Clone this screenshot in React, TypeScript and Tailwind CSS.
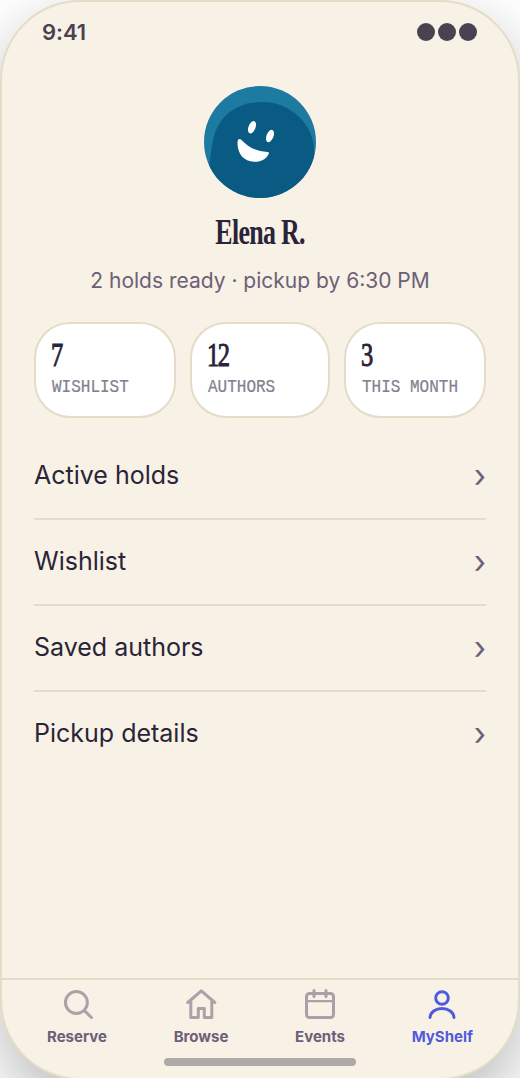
import React from "react";

const stats = [
  { value: "7", label: "WISHLIST" },
  { value: "12", label: "AUTHORS" },
  { value: "3", label: "THIS MONTH" },
];

const links = ["Active holds", "Wishlist", "Saved authors", "Pickup details"];

function Icon({ children }: { children: React.ReactNode }) {
  return (
    <svg
      width="36"
      height="36"
      viewBox="0 0 24 24"
      fill="none"
      stroke="currentColor"
      strokeWidth="2"
      strokeLinecap="round"
      strokeLinejoin="round"
    >
      {children}
    </svg>
  );
}

const tabs = [
  {
    label: "Reserve",
    icon: (
      <>
        <circle cx="11.6" cy="11" r="7.3" />
        <path d="M17 16.4l4.6 4.6" />
      </>
    ),
  },
  {
    label: "Browse",
    icon: <path d="M3.2 11L12.2 3.2l9 7.8M5.2 10V21h5v-6h4v6h5V10" />,
  },
  {
    label: "Events",
    icon: (
      <>
        <rect x="3" y="5" width="18" height="16" rx="2" />
        <path d="M8 3v4M16 3v4" />
        <path d="M3 10h18" strokeWidth="1.5" />
      </>
    ),
  },
  {
    label: "MyShelf",
    icon: (
      <>
        <circle cx="12" cy="8" r="4.2" />
        <path d="M4 21c.3-3.7 3.7-6 8-6s7.7 2.3 8 6" />
      </>
    ),
  },
];

function Avatar() {
  return (
    <svg width="112" height="112" viewBox="0 0 112 112" className="shrink-0">
      <defs>
        <clipPath id="avatar">
          <circle cx="56" cy="56" r="56" />
        </clipPath>
      </defs>
      <g clipPath="url(#avatar)">
        <rect width="112" height="112" fill="#1d7aa1" />
        <path
          d="M5 81C7 65 9 51 12 44C20 26 37 16 59 16C86 16 110 38 110 65V112H5Z"
          fill="#0a5b84"
        />
        <ellipse cx="48" cy="41.2" rx="3.5" ry="6.5" transform="rotate(22 48 41.2)" fill="#fff" />
        <ellipse cx="66" cy="50" rx="3.5" ry="6.5" transform="rotate(22 66 50)" fill="#fff" />
        <path
          d="M35.5 53Q33.5 53 33.5 57C33.5 68 40 75.5 50 75.8C57.5 76 63 72.5 65 67Q65 66 63.5 66C52 65 45 62 37.5 54Q36.5 53 35.5 53Z"
          fill="#fff"
        />
      </g>
    </svg>
  );
}

export default function App() {
  return (
    <div className="h-[1078px] w-[520px] overflow-hidden bg-white font-['Inter',sans-serif] text-[#2a2438]">
      <main className="flex h-[1080px] w-[520px] flex-col overflow-hidden rounded-[80px] border-2 border-[#e5dcc8] bg-[#f8f1e5] shadow-[0_24px_64px_rgba(0,0,0,0.28)]">
        <header className="flex h-[60px] shrink-0 items-center justify-between pr-[41px] pl-10 text-[#4a4251]">
          <span className="text-[22px] font-semibold tracking-[-0.1px]">9:41</span>
          <div className="flex gap-[3px]">
            <i className="size-[18px] rounded-full bg-[#4a4251]" />
            <i className="size-[18px] rounded-full bg-[#4a4251]" />
            <i className="size-[18px] rounded-full bg-[#4a4251]" />
          </div>
        </header>

        <section className="flex flex-col items-center pt-6">
          <Avatar />
          <h1 className="mt-[11px] flex h-[44px] w-[90px] items-center justify-center pt-[2px] font-['Liberation_Serif',serif] text-[36px] leading-[44px] font-bold tracking-[-1px] whitespace-nowrap">
            <span className="scale-x-[0.72]">Elena R.</span>
          </h1>
          <p className="mt-[14px] text-[21px] leading-[28px] text-[#6c6078]">
            2 holds ready · pickup by 6:30 PM
          </p>
        </section>

        <section className="mt-[27px] grid grid-cols-[142px_140px_142px] gap-[14px] px-8">
          {stats.map((s) => (
            <div key={s.label} className="flex h-24 flex-col items-start rounded-[36px] border-2 border-[#e5dcc8] bg-white pt-[13px] pl-[15px]">
              <span className="origin-left scale-x-[0.72] font-['Liberation_Serif',serif] text-[34px] leading-[36px] tracking-[-2px] [-webkit-text-stroke:1px_#2a2438]">{s.value}</span>
              <span className="mt-[5px] ml-px origin-center scale-y-[1.12] font-['Liberation_Mono',monospace] text-[16px] leading-5 whitespace-nowrap text-[#85808d] [-webkit-text-stroke:0.2px_#85808d]">
                {s.label}
              </span>
            </div>
          ))}
        </section>

        <nav className="mt-4 flex flex-col px-8">
          {links.map((label) => (
            <a key={label} className="flex h-[86px] items-center justify-between border-b-2 border-[#e5dcc8] text-[25px] last:border-transparent">
              <span>{label}</span>
              <span className="text-[32px] text-[#6c6078]">›</span>
            </a>
          ))}
        </nav>

        <footer className="mt-auto flex h-[100px] shrink-0 flex-col items-center border-t-2 border-[#e5dcc8]">
          <div className="flex w-full justify-between pt-[6px] pr-[45px] pl-[45px]">
            {tabs.map((t) => (
              <div key={t.label} className={`flex flex-col items-center ${t.label === "MyShelf" ? "text-[#4f5bde]" : "text-[#6c6078]"}`}>
                <span className={t.label === "MyShelf" ? "" : "opacity-55"}><Icon>{t.icon}</Icon></span>
                <span className="mt-[5px] text-[15px] leading-5 font-bold">{t.label}</span>
              </div>
            ))}
          </div>
          <div className="mt-[11px] h-2 w-48 shrink-0 rounded-full bg-[#afa9a7]" />
        </footer>
      </main>
    </div>
  );
}
